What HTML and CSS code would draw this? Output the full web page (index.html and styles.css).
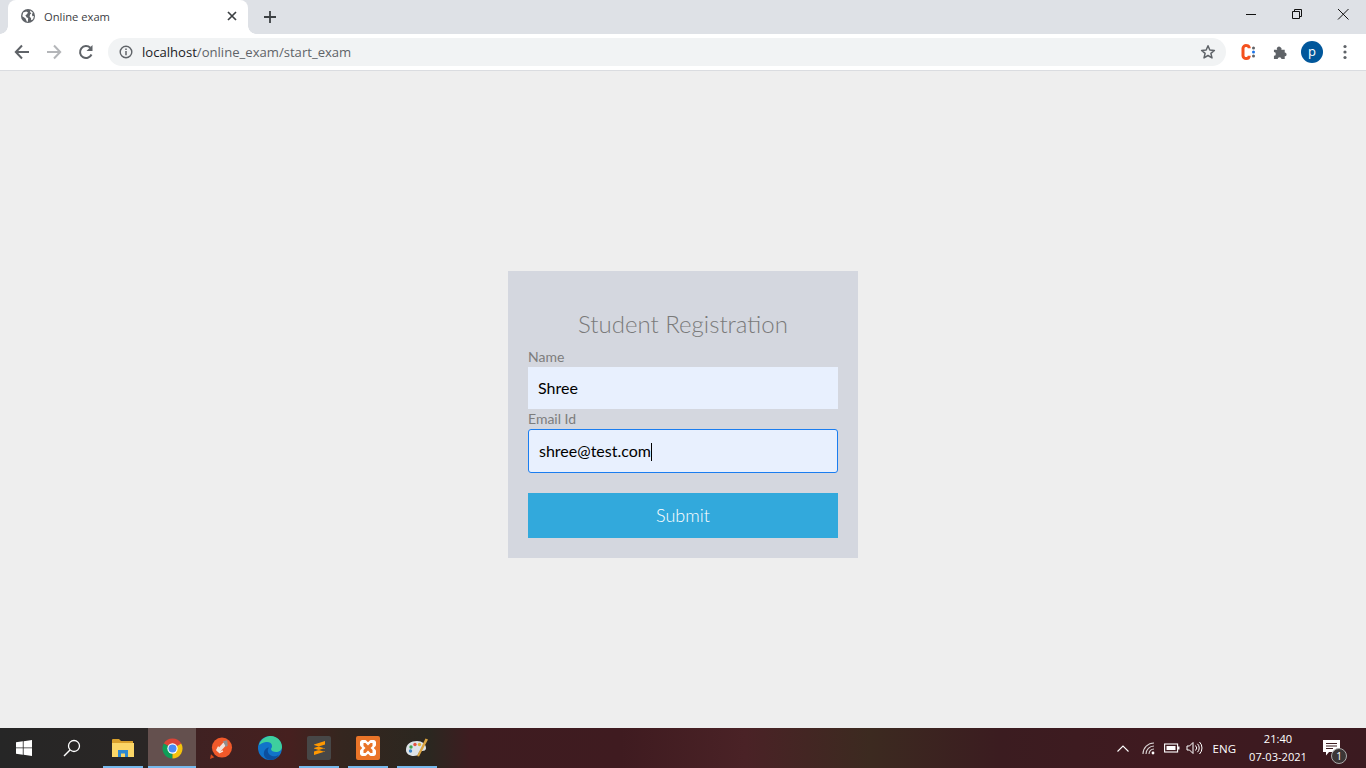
FILE: index.html
```html
<!DOCTYPE html>
<html lang="en">
<head>
<meta charset="utf-8">
<title>Online exam</title>
<link rel="stylesheet" href="styles.css">
</head>
<body>
<header class="browser">
  <div class="tabstrip">
    <div class="tab">
      <svg class="favicon" viewBox="0 0 16 16"><circle cx="8" cy="8" r="8" fill="#5f6368"/><path d="M2.500 4 6 2.800 8 4 6.800 6 5 7 6.500 9.800 8.200 10.300 7.800 14.500 6.800 14.500 5 10.500 1.500 8.200ZM10.800 1.800 13.800 4.500 12.500 5.500 13 8.200 14.800 8 13.800 11.800 11.500 12.800 11.500 10.500 9.800 8.500 10.500 6 11.800 5 10.300 3.500Z" fill="#fff"/></svg>
      <span class="tab-title">Online exam</span>
      <svg class="tab-close" viewBox="0 0 10 10"><path d="M1 1l8 8M9 1 1 9" stroke="#3c4043" stroke-width="1.700"/></svg>
    </div>
    <svg class="newtab" viewBox="0 0 12 12"><path d="M6 0v12M0 6h12" stroke="#3c4043" stroke-width="1.800"/></svg>
    <div class="window-controls">
      <svg class="wc" viewBox="0 0 46 20"><path d="M18 10.500h10" stroke="#111" stroke-width="1"/></svg>
      <svg class="wc" viewBox="0 0 46 20"><path d="M18.500 7.500h7v7h-7zM20.500 7.500v-2h7v7h-2" fill="none" stroke="#111" stroke-width="1"/></svg>
      <svg class="wc" viewBox="0 0 46 20"><path d="M18 5l10.500 10.500M28.500 5 18 15.500" stroke="#111" stroke-width="1"/></svg>
    </div>
  </div>
  <div class="toolbar">
    <svg class="navicon" viewBox="0 0 16 16"><path d="M15 8H2M8 1.500 1.800 8 8 14.500" fill="none" stroke="#5f6368" stroke-width="2"/></svg>
    <svg class="navicon" viewBox="0 0 16 16"><path d="M1 8h13M8 1.500 14.200 8 8 14.500" fill="none" stroke="#b4b6b9" stroke-width="2"/></svg>
    <svg class="navicon" viewBox="0 0 16 16"><path d="M13.500 10.500A6 6 0 1 1 12.300 3.800" fill="none" stroke="#5f6368" stroke-width="2"/><path d="M14.500 1v6h-6z" fill="#5f6368"/></svg>
    <div class="omnibox">
      <svg class="info" viewBox="0 0 14 14"><circle cx="7" cy="7" r="5.800" fill="none" stroke="#5f6368" stroke-width="1.400"/><path d="M7 6v4.200" stroke="#5f6368" stroke-width="1.500"/><path d="M7 3.500v1.500" stroke="#5f6368" stroke-width="1.500"/></svg>
      <span class="url"><span class="host">localhost</span>/online_exam/start_exam</span>
      <svg class="star" viewBox="0 0 16 16"><path d="M8 1.800l1.800 4.200 4.600.4-3.500 3 1.100 4.500L8 11.500l-4 2.400 1.100-4.500-3.500-3 4.600-.4z" fill="none" stroke="#5f6368" stroke-width="1.500" stroke-linejoin="round"/></svg>
    </div>
    <div class="extensions">
      <svg class="ext-c" viewBox="0 0 16 18"><path d="M9.200 5.200V4.800A2.800 2.800 0 0 0 6.400 2.500 3 3 0 0 0 3 5.200v7.600a3 3 0 0 0 3.400 2.700 2.800 2.800 0 0 0 2.800-2.300v-.4" fill="none" stroke="#f4511e" stroke-width="3"/><circle cx="13.500" cy="5" r="1.500" fill="#5f6368"/><circle cx="13.500" cy="9" r="1.500" fill="#1a73e8"/><circle cx="13.500" cy="13" r="1.500" fill="#5f6368"/></svg>
      <svg class="ext-p" viewBox="0 0 16 16"><path d="M1 5h3.500a2 2 0 0 1 3.500-2.500A2 2 0 0 1 9 5h3.500v3a2 2 0 1 1 0 4v3H9a2 2 0 0 0-4 0H1v-3.500a2 2 0 0 0 0-4z" fill="#5f6368"/></svg>
      <span class="avatar">p</span>
      <svg class="kebab" viewBox="0 0 4 16"><circle cx="2" cy="2.500" r="1.600" fill="#5f6368"/><circle cx="2" cy="8" r="1.600" fill="#5f6368"/><circle cx="2" cy="13.500" r="1.600" fill="#5f6368"/></svg>
    </div>
  </div>
</header>

<main class="page">
  <form class="card">
    <h1 class="card-title">Student Registration</h1>
    <label class="field-label">Name</label>
    <div class="field">Shree</div>
    <label class="field-label">Email Id</label>
    <div class="field field-focus">shree@test.com<span class="caret"></span></div>
    <div class="submit">Submit</div>
  </form>
</main>

<footer class="taskbar">
  <div class="task-left">
    <div class="task-btn"><svg class="ico-win" viewBox="0 0 16 16"><path d="M0 2.300 6.800 1.300V7.500H0ZM7.600 1.200 16 0V7.500H7.600ZM0 8.300H6.800V14.700L0 13.700ZM7.600 8.300H16V16L7.600 14.800Z" fill="#fff"/></svg></div>
    <div class="task-btn"><svg class="ico-search" viewBox="0 0 18 18"><circle cx="11" cy="7" r="5.500" fill="none" stroke="#fff" stroke-width="1.300"/><path d="M7 11 1 17" stroke="#fff" stroke-width="1.500"/></svg></div>
    <div class="task-app open"><svg class="ico-folder" viewBox="0 0 22 18"><path d="M0 1Q0 0 1 0h6l2 2h12v3H0z" fill="#d9a02c"/><path d="M0 4h22v14H0z" fill="#fbd667"/><path d="M6 11h10v7h-3v-3.500H9V18H6z" fill="#2f88d0"/></svg></div>
    <div class="task-app open active"><svg class="ico-small" viewBox="0 0 24 24"><path d="M12 12 2.900 6.800A10.500 10.500 0 0 1 21.100 6.800Z" fill="#db4437"/><path d="M12 22.500A10.500 10.500 0 0 1 2.900 6.800L12 12z" fill="#0f9d58"/><path d="M21.100 6.800A10.500 10.500 0 0 1 12 22.500L12 12z" fill="#f4c20d"/><circle cx="12" cy="12" r="5.400" fill="#fff"/><circle cx="12" cy="12" r="4.200" fill="#4a8af4"/></svg></div>
    <div class="task-app"><svg class="ico-small" viewBox="0 0 24 24"><circle cx="12.500" cy="11" r="10.500" fill="#f0592a"/><path d="M8 15.500 15.500 7" stroke="#eee3de" stroke-width="4"/><path d="M13.500 4.500 18 3.500 18.500 9 16.500 10.500Z" fill="#8f8f8f"/><path d="M9 10 7 14M13.500 14.500 9.500 16.500" stroke="#f7e4da" stroke-width="1.500"/><path d="M0 23l1-5 3.500 3z" fill="#d84a1c"/></svg></div>
    <div class="task-app"><svg class="ico" viewBox="0 0 24 24"><circle cx="12" cy="12" r="12" fill="#1173c9"/><path d="M1 9C3 2 9 0 13 0c6 0 11 5 11 11 0 3-3 5-6 5-2.500 0-5-1-5-3 0-1 1-1 1-3C14 7 11 5.500 8 6c-3 .5-5.500 2-7 3z" fill="#3ecf9e"/><path d="M13 24c-5 0-8-4-7-8 .5-2.500 3-4.500 5-4.500-1.500 1.500-2 5 1 7.500 3 2 7 1.500 9-.5-1.500 3-4.500 5.500-8 5.500z" fill="#0c4f9e"/></svg></div>
    <div class="task-app open"><svg class="ico" viewBox="0 0 24 24"><rect width="24" height="24" rx="2" fill="#474747"/><path d="M18 5 7 8.500V12L18 8.500ZM7 9 18 12.500V16L7 12.500ZM18 12 7 15.500V19L18 15.500Z" fill="#ff9800"/></svg></div>
    <div class="task-app open"><svg class="ico" viewBox="0 0 24 24"><rect width="24" height="24" rx="2" fill="#ea7428"/><path d="M6 4h3c1.500 0 2 2 3 2s1.500-2 3-2h3a2.500 2.500 0 0 1 2 2v3c0 1.500-2 2-2 3s2 1.500 2 3v3a2.500 2.500 0 0 1-2 2h-3c-1.500 0-2-2-3-2s-1.500 2-3 2H6a2.500 2.500 0 0 1-2-2v-3c0-1.500 2-2 2-3s-2-1.500-2-3V6a2.500 2.500 0 0 1 2-2z" fill="#fff"/><path d="M7.500 7h2L12 9.500 14.500 7h2v3l-2 2 2 2v3h-2L12 14.500 9.500 17h-2v-3l2-2-2-2z" fill="#ea7428"/></svg></div>
    <div class="task-app open"><svg class="ico" viewBox="0 0 24 24"><path d="M1 14C1 8 6 5 12 5c5 0 9 3 9 7 0 3-3 3-5 3-2.500 0-2 3-4 4.500C7 21 1 19 1 14z" fill="#dde3e8"/><circle cx="6" cy="11" r="1.700" fill="#3fa34d"/><circle cx="10" cy="8.500" r="1.700" fill="#e25241"/><circle cx="14.500" cy="8.500" r="1.700" fill="#e0b23a"/><circle cx="5.500" cy="15" r="1.700" fill="#3b82c4"/><path d="M12 20 20.500 2.500 23 3.500 14 20.500Z" fill="#d9a441"/></svg></div>
  </div>
  <div class="tray">
    <svg class="tray-chev" viewBox="0 0 12 7"><path d="M.5 6.500 6 1l5.500 5.500" fill="none" stroke="#fff" stroke-width="1.100"/></svg>
    <svg class="tray-wifi" viewBox="0 0 14 14"><path d="M1 13A11 11 0 0 1 12 2M4 13A8 8 0 0 1 12 5M7 13a5 5 0 0 1 5-5" fill="none" stroke="#d9d3d3" stroke-width="1.100"/><circle cx="11" cy="12" r="1.400" fill="#fff"/></svg>
    <svg class="tray-batt" viewBox="0 0 16 10"><rect x=".6" y="1" width="13" height="8" fill="none" stroke="#fff" stroke-width="1.100"/><rect x="2.500" y="3" width="9" height="4" fill="#fff"/><rect x="14" y="3.500" width="1.500" height="3" fill="#fff"/></svg>
    <svg class="tray-vol" viewBox="0 0 17 14"><path d="M1 5h2.500L7 1.500v11L3.500 9H1z" fill="none" stroke="#fff" stroke-width="1"/><path d="M9.500 4.500a3.500 3.500 0 0 1 0 5M11.500 2.800a6 6 0 0 1 0 8.400M13.500 1a8.500 8.500 0 0 1 0 12" fill="none" stroke="#fff" stroke-width="1"/></svg>
    <span class="lang">ENG</span>
    <div class="clock"><span>21:40</span><span>07-03-2021</span></div>
    <div class="notify">
      <svg class="notify-ico" viewBox="0 0 17 16"><path d="M0 0h17v12H6l-3 3.500V12H0z" fill="#fff"/><path d="M3 3.500h11M3 6h11M3 8.500h7" stroke="#3f2024" stroke-width="1"/></svg>
      <span class="badge">1</span>
    </div>
  </div>
</footer>
</body>
</html>
```
FILE: styles.css
```css
* { box-sizing: border-box; }
html, body { margin: 0; height: 100%; }
body {
  width: 1366px;
  height: 768px;
  display: flex;
  flex-direction: column;
  overflow: hidden;
  background: #eeeeee;
  font-family: "Open Sans", "Noto Sans", sans-serif;
}

/* Browser chrome */
.browser { flex: none; height: 71px; background: #fff; border-bottom: 1px solid #dadce0; }
.tabstrip { height: 34px; background: #dee1e6; display: flex; align-items: flex-end; padding-left: 8px; }
.tab {
  position: relative;
  width: 240px; height: 34px; background: #fff; border-radius: 8px 8px 0 0;
  display: flex; align-items: center; padding: 0 9px 2px 13px;
}
.tab::before, .tab::after { content: ""; position: absolute; bottom: 0; width: 8px; height: 8px; }
.tab::before { left: -8px; background: radial-gradient(circle at 0 0, transparent 7.500px, #fff 8px); }
.tab::after { right: -8px; background: radial-gradient(circle at 100% 0, transparent 7.500px, #fff 8px); }
.favicon { width: 14px; height: 14px; flex: none; }
.tab-title { margin-left: 9px; font-size: 11.200px; color: #3c4043; flex: 1; }
.tab-close { width: 10px; height: 10px; flex: none; margin-right: 2px; }
.newtab { width: 12px; height: 12px; margin: 0 0 11px 16px; flex: none; }
.window-controls { margin-left: auto; align-self: flex-start; display: flex; margin-top: 4px; }
.wc { width: 46px; height: 20px; display: block; }

.toolbar { height: 36px; display: flex; align-items: center; padding: 0 0 0 14px; }
.navicon { width: 16px; height: 16px; flex: none; margin-right: 16px; }
.omnibox {
  width: 1118px; height: 28px; margin-left: -2px; background: #f1f3f4; border-radius: 14px;
  display: flex; align-items: center; padding: 0 10px 0 11px;
}
.info { width: 14px; height: 14px; flex: none; }
.url { margin-left: 9px; font-size: 13.100px; color: #5f6368; flex: 1; white-space: nowrap; }
.host { color: #202124; }
.star { width: 16px; height: 16px; flex: none; }
.extensions { flex: 1; display: flex; align-items: center; position: relative; padding-left: 14px; }
.ext-c { width: 16px; height: 18px; flex: none; }
.ext-p { width: 15px; height: 15px; flex: none; margin-left: 17px; }
.avatar {
  width: 22px; height: 22px; border-radius: 50%; background: #01579b; color: #fff; margin-left: 13px;
  font: 13px/20px "Open Sans", sans-serif; text-align: center; flex: none;
}
.kebab { width: 4px; height: 16px; margin-left: 20px; flex: none; }

/* Page */
.page { flex: 1; display: flex; justify-content: center; padding-top: 200px; }
.card {
  width: 350px; height: 287px; background: #d4d7df; padding: 39px 20px 20px;
  display: flex; flex-direction: column; font-family: Lato, "Open Sans", sans-serif;
}
.card-title {
  margin: 0 0 10px; font-size: 24px; font-weight: 300; line-height: 28px; text-align: center; color: #7a7a7a;
}
.field-label { font-size: 14px; line-height: 17px; padding-bottom: 2px; color: #7d7d7d; }
.field {
  height: 42px; background: #e8f0fe; color: #000; font-size: 16px; line-height: 42px; padding: 0 10px;
  margin-bottom: 1px;
}
.field-focus {
  height: 44px; border: 1px solid #1a7df0; border-radius: 3px; line-height: 42px;
  margin-bottom: 20px;
}
.caret { display: inline-block; width: 1px; height: 18px; background: #000; vertical-align: -4px; }
.submit {
  height: 45px; background: #32a9dc; color: #fff; font-size: 18px; font-weight: 300; line-height: 45px; text-align: center;
}

/* Taskbar */
.taskbar {
  flex: none; height: 40px; display: flex; justify-content: space-between;
  background: linear-gradient(90deg, #262626 0, #2a2625 148px, #3f2122 196px, #46201f 290px, #35261f 340px, #2b2720 430px, #3e1c20 470px, #3f1b20 620px, #4a2226 745px, #3c2a20 870px, #3b1c20 1000px, #3f1a20 1150px, #3b1a20 100%);
}
.task-left { display: flex; }
.task-btn { width: 48px; height: 40px; display: flex; align-items: center; justify-content: center; }
.ico-win { width: 16px; height: 16px; }
.ico-search { width: 18px; height: 18px; }
.task-btn + .task-btn { margin-right: 3px; }
.task-app {
  position: relative;
  width: 48px; height: 40px; display: flex; align-items: center; justify-content: center;
  margin-right: 1px;
}
.task-app.open::after {
  content: ""; position: absolute; left: 4px; right: 4px; bottom: 0; height: 2px; background: #76b9ed;
}
.task-app.active { background: #64504e; }
.task-app.active::after { left: 0; right: 0; }
.ico { width: 24px; height: 24px; }
.ico-small { width: 23px; height: 23px; }
.ico-folder { width: 22px; height: 18px; }

.tray { display: flex; align-items: center; color: #fff; font-size: 12px; }
.tray-chev { width: 12px; height: 7px; margin-right: 13px; }
.tray-wifi { width: 14px; height: 14px; margin-right: 8px; }
.tray-batt { width: 16px; height: 10px; margin-right: 6px; }
.tray-vol { width: 17px; height: 14px; margin-right: 10px; }
.lang { margin-right: 10px; font-size: 11.500px; }
.clock { display: flex; flex-direction: column; align-items: center; width: 64px; font-size: 11.100px; line-height: 18px; margin-right: 13px; }
.notify { position: relative; width: 43px; height: 40px; }
.notify-ico { position: absolute; left: 0; top: 12px; width: 17px; height: 16px; }
.badge {
  position: absolute; left: 8px; top: 20px; width: 16px; height: 16px; border-radius: 50%;
  background: #3c3636; border: 1px solid #aaa; font-size: 10px; line-height: 14px; text-align: center;
}
```
